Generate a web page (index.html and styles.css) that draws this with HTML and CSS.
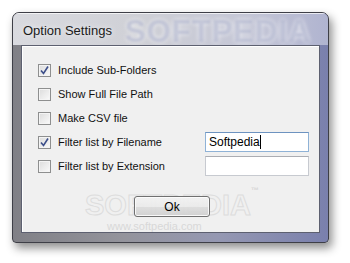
FILE: index.html
```html
<!DOCTYPE html>
<html lang="en">
<head>
<meta charset="UTF-8">
<title>Option Settings</title>
<link rel="stylesheet" href="styles.css">
</head>
<body>

<div class="window">
    <div class="titlebar">
        <span class="title">Option Settings</span>
        <span class="titleMark">SOFTPEDIA</span>
    </div>

    <div class="frameBody">
        <div class="client">
            <div class="watermark">SOFTPEDIA<sup>™</sup></div>
            <div class="watermarkUrl">www.softpedia.com</div>

            <div class="row">
                <label class="check">
                    <span class="box checked"><svg width="9" height="9" viewBox="0 0 9 9"><path d="M1 4.5 L3.5 7.5 L8 0.5" fill="none" stroke="#3d4f8a" stroke-width="1.6"/></svg></span>
                    Include Sub-Folders
                </label>
            </div>
            <div class="row">
                <label class="check"><span class="box"></span>Show Full File Path</label>
            </div>
            <div class="row">
                <label class="check"><span class="box"></span>Make CSV file</label>
            </div>
            <div class="row">
                <label class="check">
                    <span class="box checked"><svg width="9" height="9" viewBox="0 0 9 9"><path d="M1 4.5 L3.5 7.5 L8 0.5" fill="none" stroke="#3d4f8a" stroke-width="1.6"/></svg></span>
                    Filter list by Filename
                </label>
                <div class="field focused">Softpedia<span class="caret"></span></div>
            </div>
            <div class="row">
                <label class="check"><span class="box"></span>Filter list by Extension</label>
                <div class="field"></div>
            </div>

            <div class="buttonRow">
                <div class="okButton">Ok</div>
            </div>
        </div>
    </div>
</div>

</body>
</html>
```

FILE: styles.css
```css
body {
    margin: 0;
    width: 350px;
    height: 263px;
    background: #ffffff;
    font-family: "Liberation Sans", Arial, sans-serif;
    overflow: hidden;
}

.window {
    margin: 12px 0 0 12px;
    width: 317px;
    height: 231px;
    box-sizing: border-box;
    border: 1px solid #3e3f47;
    border-radius: 7px 7px 4px 4px;
    background: linear-gradient(to right, #808086 0%, #94949c 35%, #9598b2 65%, #7a80ad 100%);
    box-shadow: 3px 5px 10px rgba(0, 0, 0, 0.45);
    display: flex;
    flex-direction: column;
    overflow: hidden;
}

.titlebar {
    position: relative;
    height: 32px;
    box-sizing: border-box;
    flex: none;
    background: linear-gradient(to right, #d9dadf 0%, #cfd0d6 40%, #c4c6d6 75%, #b0b4d0 100%);
    box-shadow: inset 0 1px 0 rgba(255, 255, 255, 0.7);
    display: flex;
    align-items: center;
    padding: 2px 0 0 10px;
}

.title {
    font-size: 13px;
    color: #1b1b1b;
    position: relative;
    z-index: 1;
    text-shadow: 0 0 6px rgba(255, 255, 255, 0.9);
}

/* znak wodny w pasku tytułu */
.titleMark {
    position: absolute;
    left: 112px;
    top: 1px;
    font-size: 31px;
    font-weight: bold;
    letter-spacing: 1px;
    color: rgba(160, 165, 195, 0.5);
    text-shadow: 0 0 4px rgba(255, 255, 255, 0.8);
    filter: blur(1.2px);
}

.frameBody {
    flex: 1;
    padding: 0 8px 9px 8px;
    display: flex;
}

.client {
    position: relative;
    flex: 1;
    border: 1px solid #5d6070;
    background: #f0f0f0;
    box-shadow: inset 1px 1px 0 #ffffff;
    padding: 12px 0 0 16px;
}

.row {
    position: relative;
    height: 24px;
    display: flex;
    align-items: center;
}

.check {
    width: 167px;
    display: flex;
    align-items: center;
    gap: 7px;
    font-size: 11px;
    color: #111111;
}

.box {
    width: 13px;
    height: 13px;
    box-sizing: border-box;
    border: 1px solid #8e8f8f;
    background: linear-gradient(135deg, #dcdcdc 0%, #f4f4f4 80%, #ffffff 100%);
    box-shadow: inset 0 0 0 1px #f4f4f4;
    display: flex;
    align-items: center;
    justify-content: center;
    flex: none;
}

.field {
    width: 104px;
    height: 20px;
    box-sizing: border-box;
    border: 1px solid #c7cad0;
    border-top-color: #abadb3;
    background: #ffffff;
    font-size: 12px;
    padding: 2px 0 0 3px;
    color: #000000;
}

.field.focused {
    border-color: #8fb2d6;
    border-top-color: #6d93c0;
}

.caret {
    display: inline-block;
    width: 1px;
    height: 14px;
    background: #000000;
    vertical-align: top;
}

.buttonRow {
    display: flex;
    justify-content: center;
    padding-right: 13px;
    margin-top: 18px;
    position: relative;
}

.okButton {
    width: 76px;
    height: 21px;
    box-sizing: border-box;
    border: 1px solid #707070;
    border-radius: 3px;
    background: linear-gradient(to bottom, rgba(242, 242, 242, 0.92) 0%, rgba(235, 235, 235, 0.92) 50%, rgba(221, 221, 221, 0.92) 51%, rgba(207, 207, 207, 0.92) 100%);
    box-shadow: inset 0 0 0 1px rgba(252, 252, 252, 0.9);
    font-size: 12px;
    display: flex;
    align-items: center;
    justify-content: center;
    color: #000000;
}

/* znak wodny w oknie, pod kontrolkami */
.watermark {
    position: absolute;
    left: 63px;
    top: 140px;
    font-size: 29px;
    font-weight: bold;
    color: transparent;
    -webkit-text-stroke: 1px #dddddd;
}

.watermark sup {
    font-size: 8px;
    -webkit-text-stroke: 0;
    color: #d6d6d6;
    vertical-align: 22px;
}

.watermarkUrl {
    position: absolute;
    left: 85px;
    top: 174px;
    font-size: 11px;
    color: #d8d8d8;
}
```
